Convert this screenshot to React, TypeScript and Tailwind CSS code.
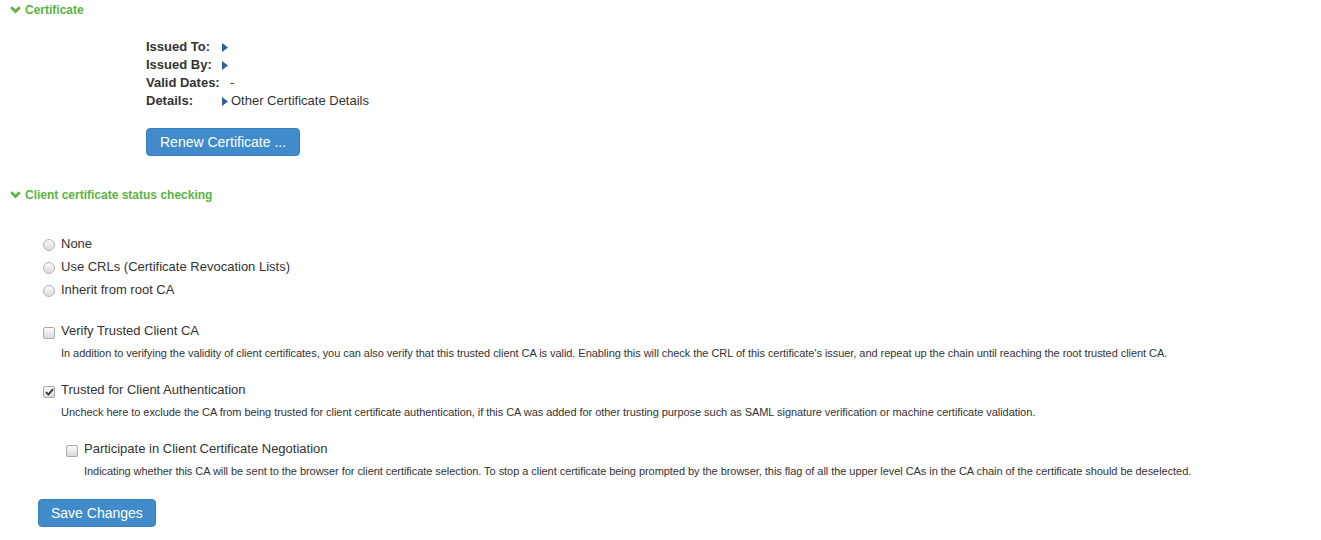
import { useState } from 'react';

function Chevron() {
  return (
    <svg width="11" height="8" viewBox="0 0 11 8" className="shrink-0">
      <path d="M1.2 1.3 L5.5 5.6 L9.8 1.3" fill="none" stroke="#5cb345" strokeWidth="2.8" />
    </svg>
  );
}

function Caret() {
  return (
    <svg width="6" height="9" viewBox="0 0 6 9" className="shrink-0">
      <path d="M0 0 L6 4.5 L0 9 Z" fill="#2f5f96" />
    </svg>
  );
}

function SectionTitle({ children }: { children: string }) {
  return (
    <div className="flex items-center gap-[4px] pl-[10px] h-[18px] pt-[1px] text-[12px] font-bold text-[#5cb345]">
      <Chevron />
      <span>{children}</span>
    </div>
  );
}

function Radio({ label }: { label: string }) {
  return (
    <div className="flex items-center h-[23px] pl-[43px]">
      <span className="w-[12px] h-[12px] rounded-full border border-[#b5b5b5] bg-gradient-to-b from-[#fafafa] to-[#dcdcdc] mr-[6px] mt-[3px]" />
      <span className="text-[13px] text-[#333]">{label}</span>
    </div>
  );
}

function Check({ checked, label }: { checked?: boolean; label: string }) {
  return (
    <div className="flex items-center h-[18px]">
      <span className="w-[12px] h-[12px] rounded-[2px] border border-[#a8a8a8] bg-gradient-to-b from-[#fafafa] to-[#dcdcdc] mr-[6px] mt-[3px] flex items-center justify-center">
        {checked && (
          <svg width="9" height="8" viewBox="0 0 9 8">
            <path d="M1 4.2 L3.4 6.5 L8 1.2" fill="none" stroke="#333" strokeWidth="1.8" />
          </svg>
        )}
      </span>
      <span className="text-[13px] text-[#333]">{label}</span>
    </div>
  );
}

function Option({ checked, label, help, indent }: { checked?: boolean; label: string; help: string; indent?: boolean }) {
  return (
    <div className={indent ? 'pl-[66px]' : 'pl-[43px]'}>
      <Check checked={checked} label={label} />
      <p className="pl-[18px] mt-[6px] text-[11px] leading-[14px] tracking-[-0.05px] text-[#333]">{help}</p>
    </div>
  );
}

export default function App() {
  const [status] = useState('none');
  const rows = [
    { label: 'Issued To:', value: <Caret /> },
    { label: 'Issued By:', value: <Caret /> },
    { label: 'Valid Dates:', value: <span className="font-normal ml-[8px]">-</span> },
    {
      label: 'Details:',
      value: (
        <span className="flex items-center gap-[3px] font-normal">
          <Caret />
          Other Certificate Details
        </span>
      ),
    },
  ];

  return (
    <div className="w-[1321px] h-[540px] bg-white font-['Liberation_Sans',Arial,sans-serif] text-[#333] overflow-hidden" data-status={status}>
      <SectionTitle>Certificate</SectionTitle>

      <div className="pl-[146px] mt-[20px]">
        {rows.map((r) => (
          <div key={r.label} className="flex items-center h-[18px] text-[13px] whitespace-nowrap">
            <span className="w-[76px] shrink-0 font-bold">{r.label}</span>
            {r.value}
          </div>
        ))}
        <button className="mt-[18px] h-[28px] px-[13px] rounded-[4px] bg-[#418bcb] border border-[#3a7fbc] text-white text-[14px]">
          Renew Certificate ...
        </button>
      </div>

      <div className="mt-[29px]">
        <SectionTitle>Client certificate status checking</SectionTitle>
      </div>

      <div className="mt-[29px]">
        <Radio label="None" />
        <Radio label="Use CRLs (Certificate Revocation Lists)" />
        <Radio label="Inherit from root CA" />
      </div>

      <div className="mt-[21px] flex flex-col gap-[21px]">
        <Option
          label="Verify Trusted Client CA"
          help="In addition to verifying the validity of client certificates, you can also verify that this trusted client CA is valid. Enabling this will check the CRL of this certificate's issuer, and repeat up the chain until reaching the root trusted client CA."
        />
        <Option
          checked
          label="Trusted for Client Authentication"
          help="Uncheck here to exclude the CA from being trusted for client certificate authentication, if this CA was added for other trusting purpose such as SAML signature verification or machine certificate validation."
        />
        <Option
          indent
          label="Participate in Client Certificate Negotiation"
          help="Indicating whether this CA will be sent to the browser for client certificate selection. To stop a client certificate being prompted by the browser, this flag of all the upper level CAs in the CA chain of the certificate should be deselected."
        />
      </div>

      <div className="pl-[38px] mt-[21px]">
        <button className="h-[28px] px-[12px] rounded-[4px] bg-[#418bcb] border border-[#3a7fbc] text-white text-[14px]">
          Save Changes
        </button>
      </div>
    </div>
  );
}
